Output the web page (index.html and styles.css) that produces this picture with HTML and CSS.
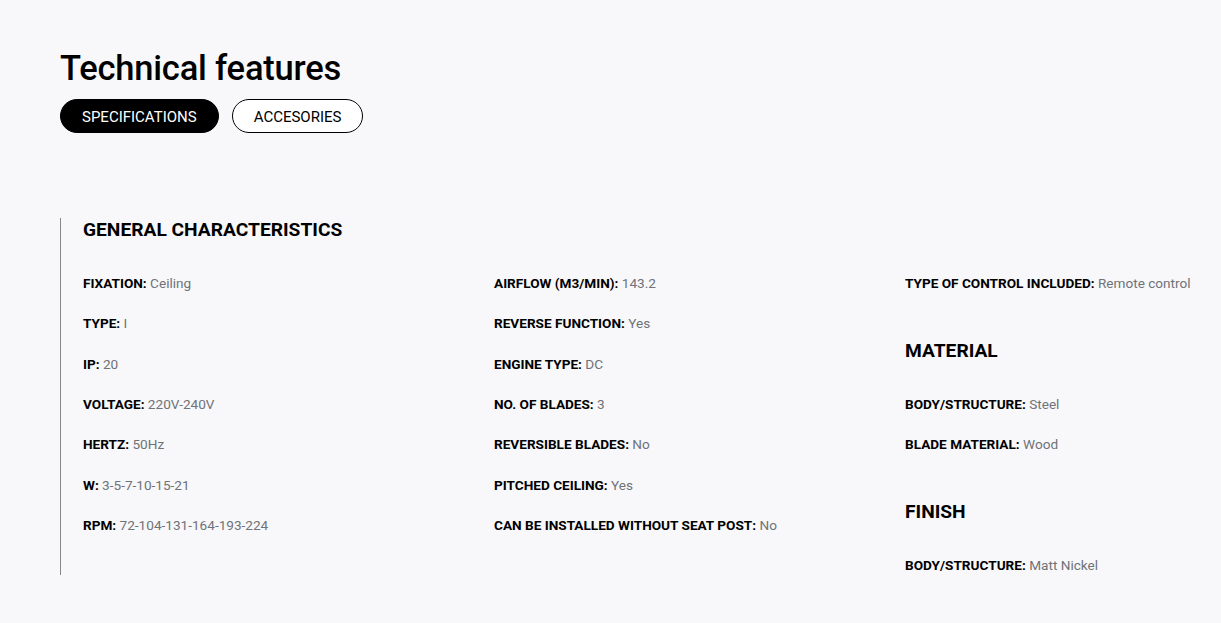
FILE: index.html
```html
<!DOCTYPE html>
<html lang="en">
<head>
<meta charset="utf-8">
<title>Technical features</title>
<link rel="stylesheet" href="styles.css">
</head>
<body>
<main class="page">
  <h1 class="title">Technical features</h1>
  <div class="tabs">
    <button class="tab tab-active">SPECIFICATIONS</button>
    <button class="tab">ACCESORIES</button>
  </div>
  <section class="specs">
    <h3 class="heading heading-first">GENERAL CHARACTERISTICS</h3>
    <div class="grid">
      <div class="col">
        <div class="item"><b>FIXATION:</b> <span>Ceiling</span></div>
        <div class="item"><b>TYPE:</b> <span>I</span></div>
        <div class="item"><b>IP:</b> <span>20</span></div>
        <div class="item"><b>VOLTAGE:</b> <span>220V-240V</span></div>
        <div class="item"><b>HERTZ:</b> <span>50Hz</span></div>
        <div class="item"><b>W:</b> <span>3-5-7-10-15-21</span></div>
        <div class="item"><b>RPM:</b> <span>72-104-131-164-193-224</span></div>
      </div>
      <div class="col">
        <div class="item"><b>AIRFLOW (M3/MIN):</b> <span>143.2</span></div>
        <div class="item"><b>REVERSE FUNCTION:</b> <span>Yes</span></div>
        <div class="item"><b>ENGINE TYPE:</b> <span>DC</span></div>
        <div class="item"><b>NO. OF BLADES:</b> <span>3</span></div>
        <div class="item"><b>REVERSIBLE BLADES:</b> <span>No</span></div>
        <div class="item"><b>PITCHED CEILING:</b> <span>Yes</span></div>
        <div class="item"><b>CAN BE INSTALLED WITHOUT SEAT POST:</b> <span>No</span></div>
      </div>
      <div class="col">
        <div class="item"><b>TYPE OF CONTROL INCLUDED:</b> <span>Remote control</span></div>
        <h3 class="heading">MATERIAL</h3>
        <div class="item"><b>BODY/STRUCTURE:</b> <span>Steel</span></div>
        <div class="item"><b>BLADE MATERIAL:</b> <span>Wood</span></div>
        <h3 class="heading">FINISH</h3>
        <div class="item"><b>BODY/STRUCTURE:</b> <span>Matt Nickel</span></div>
      </div>
    </div>
  </section>
</main>
</body>
</html>
```
FILE: styles.css
```css
html, body {
  margin: 0;
  padding: 0;
  background: #f8f8fa;
}
body {
  font-family: Roboto, "Liberation Sans", Arial, sans-serif;
  color: #000;
}
.page {
  padding: 47px 0 0 60px;
}
.title {
  margin: 0;
  font-size: 34.5px;
  line-height: 42px;
  font-weight: 500;
  letter-spacing: -0.2px;
}
.tabs {
  display: flex;
  gap: 13px;
  margin-top: 10px;
}
.tab {
  font-family: inherit;
  font-size: 15px;
  line-height: 18px;
  height: 34px;
  padding: 1px 21px 0;
  border-radius: 17px;
  border: 1px solid #000;
  background: #fff;
  color: #000;
  cursor: pointer;
}
.tab-active {
  background: #000;
  color: #fff;
}
.specs {
  margin-top: 85px;
  border-left: 1px solid #888;
  padding-left: 22px;
}
.heading {
  margin: 25.67px 0 31px;
  font-size: 19.2px;
  line-height: 24px;
  font-weight: 700;
}
.heading-first {
  margin-top: 0;
}
.grid {
  display: grid;
  grid-template-columns: 411px 411px minmax(0, 1fr);
}
.col {
  display: flex;
  flex-direction: column;
}
.item {
  font-size: 13.6px;
  line-height: 20px;
  margin-bottom: 20.33px;
  white-space: nowrap;
}
.col > :last-child {
  margin-bottom: 0;
}
.item b {
  font-weight: 700;
}
.item span {
  color: #6f7278;
}
```
